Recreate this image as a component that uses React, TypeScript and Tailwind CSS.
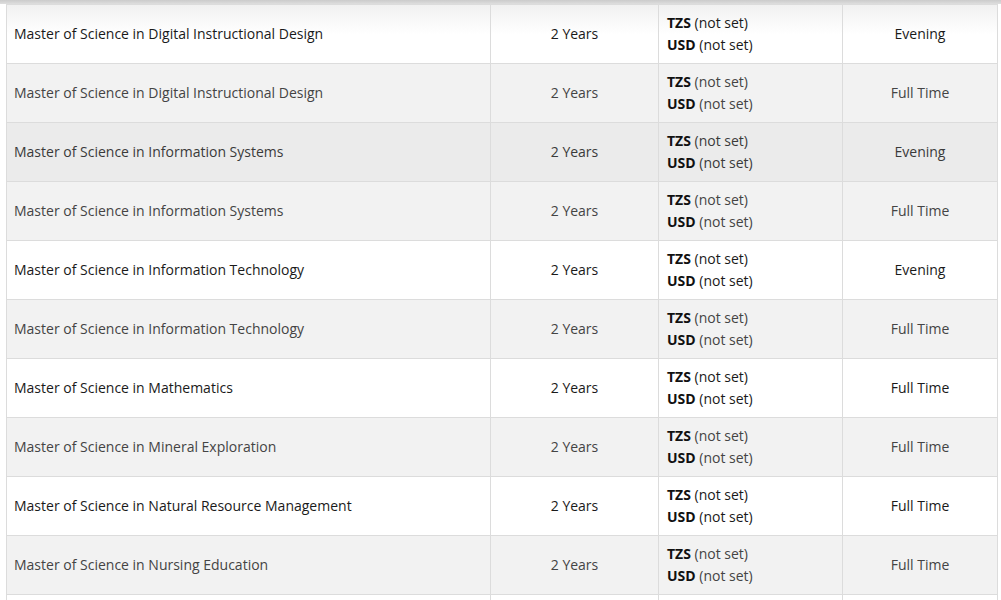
const rows = [
  { name: 'Master of Science in Digital Instructional Design', mode: 'Evening' },
  { name: 'Master of Science in Digital Instructional Design', mode: 'Full Time' },
  { name: 'Master of Science in Information Systems', mode: 'Evening' },
  { name: 'Master of Science in Information Systems', mode: 'Full Time' },
  { name: 'Master of Science in Information Technology', mode: 'Evening' },
  { name: 'Master of Science in Information Technology', mode: 'Full Time' },
  { name: 'Master of Science in Mathematics', mode: 'Full Time' },
  { name: 'Master of Science in Mineral Exploration', mode: 'Full Time' },
  { name: 'Master of Science in Natural Resource Management', mode: 'Full Time' },
  { name: 'Master of Science in Nursing Education', mode: 'Full Time' },
];

export default function App() {
  return (
    <div className="h-[600px] w-[1001px] overflow-hidden bg-white font-['Open_Sans',sans-serif] text-[14px]">
      <div className="h-[4px] bg-gradient-to-b from-[#cbcbcb] to-[#dedede]" />
      <div className="pl-[6px]">
        <table className="w-[991px] table-fixed border-collapse">
          <colgroup>
            <col className="w-[484px]" />
            <col className="w-[168px]" />
            <col className="w-[184px]" />
            <col className="w-[155px]" />
          </colgroup>
          <tbody>
            {rows.map((r, i) => {
              const striped = i % 2 === 1;
              const hovered = i === 2;
              const bg = hovered
                ? 'bg-[#ebebeb] text-[#3a3a3a]'
                : striped
                ? 'bg-[#f2f2f2] text-[#444]'
                : i === 0
                ? 'bg-gradient-to-b from-[#f1f1f1] via-white to-white text-[#1a1a1a]'
                : 'bg-white text-[#1a1a1a]';
              return (
                <tr key={i} className={bg}>
                  <td className="h-[59px] border border-[#dcdcdc] pl-[7px] pr-[8px] py-[7px] align-middle leading-[22px]">
                    {r.name}
                  </td>
                  <td className="border border-[#dcdcdc] px-[8px] py-[7px] text-center align-middle leading-[22px]">
                    2 Years
                  </td>
                  <td className="border border-[#dcdcdc] px-[8px] py-[7px] align-middle leading-[22px]">
                    <div>
                      <b className="font-bold text-[#111]">TZS</b> (not set)
                    </div>
                    <div>
                      <b className="font-bold text-[#111]">USD</b> (not set)
                    </div>
                  </td>
                  <td className="border border-[#dcdcdc] px-[8px] py-[7px] text-center align-middle leading-[22px]">
                    {r.mode}
                  </td>
                </tr>
              );
            })}
            {/* next row, only its top edge is in view */}
            <tr className="bg-white">
              <td className="h-[59px] border border-[#dcdcdc]" />
              <td className="border border-[#dcdcdc]" />
              <td className="border border-[#dcdcdc]" />
              <td className="border border-[#dcdcdc]" />
            </tr>
          </tbody>
        </table>
      </div>
    </div>
  );
}
